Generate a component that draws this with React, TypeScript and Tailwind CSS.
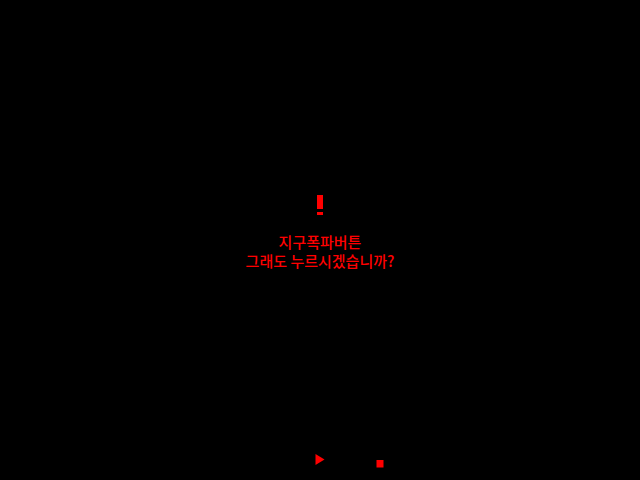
export default function App() {
  return (
    <main className="flex h-screen flex-col bg-black font-['Noto_Sans_CJK_KR',sans-serif] text-[#ff0000]">
      <section className="flex flex-1 flex-col items-center justify-center gap-[17px] pt-[11px]">
        <svg className="h-5 w-1.5" viewBox="0 0 6 20" fill="currentColor" aria-hidden="true">
          <rect width="6" height="14" />
          <rect y="17" width="6" height="3" />
        </svg>
        <p className="text-center text-[15px] leading-[19px] font-medium">
          지구폭파버튼
          <br />
          그래도 누르시겠습니까?
        </p>
      </section>

      {/* first column stays empty so that the play button sits in the middle */}
      <nav className="grid grid-cols-[60px_60px_60px] items-end justify-center pb-3">
        <button type="button" aria-label="재생" className="col-start-2 flex justify-center pb-[3px]">
          <svg className="h-[11px] w-2.5" viewBox="0 0 10 11" fill="currentColor">
            <path d="M0.5 0 9.5 5.5 0.5 11Z" />
          </svg>
        </button>
        <button type="button" aria-label="정지" className="flex justify-center">
          <svg className="size-2" viewBox="0 0 8 8" fill="currentColor">
            <rect x="0.5" width="7" height="7.5" />
          </svg>
        </button>
      </nav>
    </main>
  );
}
